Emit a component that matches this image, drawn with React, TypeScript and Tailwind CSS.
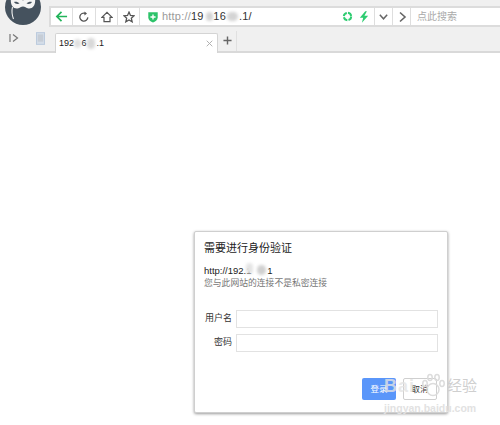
import React from "react";

function Blur({ className }: { className: string }) {
  return <span className={"absolute rounded-full bg-[#d4d4d4] blur-[1.5px] " + className} />;
}

export default function App() {
  return (
    <div className="relative flex h-[425px] w-[500px] flex-col overflow-hidden bg-white font-['Liberation_Sans','Noto_Sans_CJK_SC',sans-serif] text-[#222]">
      {/* logo */}
      <div className="absolute left-[5px] top-[-11px] z-10 h-[36px] w-[36px] overflow-hidden rounded-full bg-[#45525e]">
        <svg viewBox="0 0 36 36" className="h-full w-full">
          <path d="M6 9 C10 7 14 9 18 11.500 C22 9 26 7 30 9 C31 16 28 20 23.500 19.500 C21 19 20 17.500 18 17.500 C16 17.500 15 19 12.500 19.500 C8 20 5 16 6 9 Z" fill="#f4f4f4" />
          <path d="M7.500 18 C6.500 22 7 26 8.500 30" stroke="#f0f0f0" strokeWidth="1.100" fill="none" />
          <path d="M9 13 C11 12.500 13 13 14.500 14.500 C12.500 15.500 10 15 9 13 Z" fill="#45525e" />
          <path d="M27 13 C25 12.500 23 13 21.500 14.500 C23.500 15.500 26 15 27 13 Z" fill="#45525e" />
        </svg>
      </div>

      {/* toolbar */}
      <div className="flex h-[27px] shrink-0 items-end bg-[#f0f0f0] pl-[49px]">
        <div className="flex h-[21px] flex-1 items-stretch border-y-2 border-l-2 border-[#dcdcdc] bg-white">
          <div className="flex w-[22px] items-center justify-center border-r border-[#dedede]">
            <svg viewBox="0 0 14 14" className="h-[13px] w-[13px]" fill="none" stroke="#22b45a" strokeWidth="1.800">
              <path d="M13 7 H2 M7 2 L2 7 L7 12" />
            </svg>
          </div>
          <div className="flex w-[23px] items-center justify-center border-r border-[#dedede]">
            <svg viewBox="0 0 14 14" className="h-[12px] w-[12px]" fill="none" stroke="#555" strokeWidth="1.500">
              <path d="M11.500 7.500 A4.700 4.700 0 1 1 8.500 2.700" />
              <path d="M7.500 0.500 L10.500 2.800 L7.500 5.200" fill="#555" stroke="none" />
            </svg>
          </div>
          <div className="flex w-[22px] items-center justify-center border-r border-[#dedede]">
            <svg viewBox="0 0 14 14" className="h-[12px] w-[12px]" fill="none" stroke="#555" strokeWidth="1.400">
              <path d="M1 7.500 L7 1.500 L13 7.500 H10.500 V12.500 H3.500 V7.500 Z" />
            </svg>
          </div>
          <div className="flex w-[22px] items-center justify-center border-r border-[#dedede]">
            <svg viewBox="0 0 14 14" className="h-[12px] w-[12px]" fill="none" stroke="#555" strokeWidth="1.500">
              <path d="M7 1.300 L8.700 5.200 L12.900 5.600 L9.700 8.400 L10.700 12.600 L7 10.400 L3.300 12.600 L4.300 8.400 L1.100 5.600 L5.300 5.200 Z" />
            </svg>
          </div>
          {/* address */}
          <div className="relative flex w-[235px] items-center border-r border-[#dedede] pl-[7px]">
            <svg viewBox="0 0 14 14" className="h-[12px] w-[12px]">
              <path d="M1.500 1.500 H12.500 V7.500 C12.500 10.500 9.500 12.500 7 13.500 C4.500 12.500 1.500 10.500 1.500 7.500 Z" fill="#2dc36a" />
              <path d="M7 4 V10 M4 7 H10" stroke="#fff" strokeWidth="1.600" />
            </svg>
            <span className="relative ml-[3px] text-[11px] leading-none tracking-[0.2px] text-[#9a9a9a]">
              http://<span className="text-[#333]">19&nbsp;&nbsp;&nbsp;16&nbsp;&nbsp;&nbsp;&nbsp;.1/</span>
              <Blur className="left-[44px] top-[1px] h-[9px] w-[7px]" />
              <Blur className="left-[65px] top-[1px] h-[9px] w-[11px]" />
            </span>
            <div className="ml-auto mr-[5px] flex items-center gap-[6px]">
              <svg viewBox="0 0 12 12" className="h-[11px] w-[11px]" fill="none" stroke="#2ecc71" strokeWidth="2.200">
                <circle cx="6" cy="6" r="4" strokeDasharray="5 1.300" />
              </svg>
              <svg viewBox="0 0 12 14" className="h-[12px] w-[10px]" fill="#2ecc71">
                <path d="M7.500 0 L1 8 H5 L3.500 14 L11 5.500 H6.500 L9.500 0 Z" />
              </svg>
            </div>
          </div>
          <div className="flex w-[18px] items-center justify-center border-r border-[#dedede]">
            <svg viewBox="0 0 12 12" className="h-[11px] w-[11px]" fill="none" stroke="#666" strokeWidth="1.600">
              <path d="M2 4 L6 8.500 L10 4" />
            </svg>
          </div>
          <div className="flex w-[18px] items-center justify-center border-r border-[#dedede]">
            <svg viewBox="0 0 12 12" className="h-[12px] w-[12px]" fill="none" stroke="#666" strokeWidth="1.600">
              <path d="M4 1.500 L9 6 L4 10.500" />
            </svg>
          </div>
          <div className="flex flex-1 items-center pl-[6px] text-[10px] text-[#aaa]">点此搜索</div>
        </div>
      </div>

      {/* tab strip */}
      <div className="flex h-[26px] shrink-0 items-end border-b-2 border-[#d9d9d9] bg-[#f0f0f0]">
        <div className="flex h-full w-[55px] items-center justify-between pb-[2px] pl-[9px] pr-[10px]">
          <svg viewBox="0 0 10 10" className="h-[10px] w-[10px]" fill="none" stroke="#777" strokeWidth="1.200">
            <path d="M1 1 V9 M4 1.500 L8.500 5 L4 8.500" />
          </svg>
          <svg viewBox="0 0 10 14" className="h-[13px] w-[9px]">
            <rect x="0.500" y="0.500" width="9" height="13" fill="#d4dde8" stroke="#b8c8dc" />
            <rect x="2" y="2.500" width="6" height="8" fill="#c6cdd6" />
          </svg>
        </div>
        <div className="relative -mb-[2px] flex h-[20px] w-[163px] items-center justify-between rounded-t-[2px] border-x border-t border-[#d4d4d4] bg-white pl-[3px] pr-[4px]">
          <span className="relative text-[9px] leading-none text-[#222]">
            192&nbsp;&nbsp;&nbsp;6&nbsp;&nbsp;&nbsp;&nbsp;.1
            <Blur className="left-[15px] top-0 h-[9px] w-[7px] !bg-[#e0e0e0]" />
            <Blur className="left-[28px] top-[-1px] h-[11px] w-[8px] !bg-[#d8d8d8]" />
          </span>
          <svg viewBox="0 0 10 10" className="h-[7px] w-[7px]" stroke="#aaa" strokeWidth="1.300">
            <path d="M1 1 L9 9 M9 1 L1 9" />
          </svg>
        </div>
        <div className="flex h-[20px] w-[19px] items-center justify-center border-r border-[#e0e0e0] pb-[2px]">
          <svg viewBox="0 0 10 10" className="h-[9px] w-[9px]" stroke="#666" strokeWidth="1.600">
            <path d="M5 0.500 V9.500 M0.500 5 H9.500" />
          </svg>
        </div>
      </div>

      {/* page */}
      <div className="flex flex-1 justify-start pl-[194px] pt-[178px]">
        <div className="flex h-[182px] w-[254px] flex-col rounded-[2px] border border-[#cfcfcf] bg-white px-[9px] pt-[9px] shadow-[0_1px_3px_rgba(0,0,0,0.4)]">
          <div className="text-[11px] leading-[14px] text-[#222]">需要进行身份验证</div>
          <div className="relative mt-[10px] text-[9.500px] leading-[11px] text-[#222]">
            http://192.1&nbsp;&nbsp;&nbsp;&nbsp;&nbsp;&nbsp;1
            <Blur className="left-[42px] top-[-2px] h-[11px] w-[7px] !bg-[#e4e4e4]" />
            <Blur className="left-[53px] top-0 h-[10px] w-[9px] !bg-[#d0d0d0]" />
          </div>
          <div className="mt-[2px] text-[8.800px] leading-[11px] text-[#777]">您与此网站的连接不是私密连接</div>
          <div className="mt-[21px] flex items-center">
            <span className="w-[28px] text-right text-[9px] text-[#333]">用户名</span>
            <div className="ml-[4px] h-[18px] w-[202px] border border-[#e2e2e2]" />
          </div>
          <div className="mt-[6px] flex items-center">
            <span className="w-[28px] text-right text-[9px] text-[#333]">密码</span>
            <div className="ml-[4px] h-[18px] w-[202px] border border-[#e2e2e2]" />
          </div>
          <div className="mt-[26px] flex justify-end gap-[7px] pr-[1px]">
            <div className="flex h-[22px] w-[34px] items-center justify-center rounded-[2px] bg-[#5a96fa] text-[8.500px] text-white">登录</div>
            <div className="flex h-[22px] w-[34px] items-center justify-center rounded-[2px] border border-[#cfcfcf] bg-white text-[8.500px] text-[#333]">取消</div>
          </div>
        </div>
      </div>

      {/* watermark */}
      <div className="absolute left-[384px] top-[372px] flex flex-col items-start whitespace-nowrap leading-none">
        <div className="flex items-end">
          <span className="mb-[1px] text-[18px] font-bold leading-[24px] tracking-[1px] text-[#e4e4e4]/80">Bai</span>
          <svg viewBox="0 0 24 24" className="ml-[6px] h-[27px] w-[24px] shrink-0" fill="none" stroke="#dcdcdc" strokeWidth="1.500">
            <ellipse cx="12" cy="16" rx="6" ry="6" />
            <ellipse cx="4" cy="10" rx="2.200" ry="3" />
            <ellipse cx="9" cy="4" rx="2.200" ry="3" />
            <ellipse cx="16" cy="4" rx="2.200" ry="3" />
            <ellipse cx="21" cy="10" rx="2.200" ry="3" />
          </svg>
          <span className="mb-[3px] ml-[2px] text-[15px] leading-[20px] text-[#cfcfcf]">经验</span>
        </div>
        <span className="mt-[4px] text-[10.500px] font-bold text-[#e2e2e2]">jingyan.baidu.com</span>
      </div>
    </div>
  );
}
